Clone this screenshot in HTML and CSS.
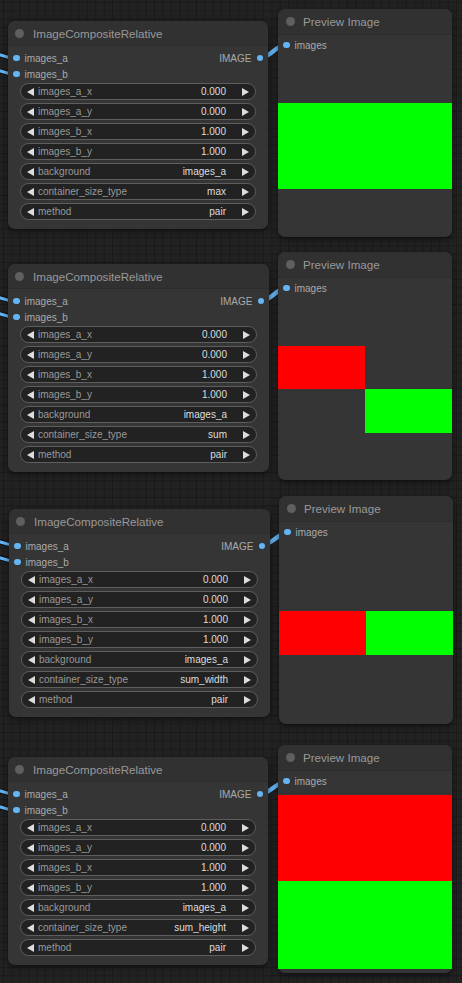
FILE: index.html
```html
<!DOCTYPE html>
<html>
<head>
<meta charset="utf-8">
<title>ImageCompositeRelative</title>
<link rel="stylesheet" href="styles.css">
</head>
<body>
<div class="canvas">
  <svg class="links" width="462" height="983" viewBox="0 0 462 983">
    <g class="edge">
      <path d="M -30 47 C -5 47, -5 58, 16 58"/>
      <path d="M -30 63 C -5 63, -5 74, 16 74"/>
      <path d="M 260 58 C 270 58, 276 45, 286 45"/>
      <path d="M -30 290 C -5 290, -5 301, 16 301"/>
      <path d="M -30 306 C -5 306, -5 317, 16 317"/>
      <path d="M 261 301 C 271 301, 277 288, 286 288"/>
      <path d="M -30 534 C -5 534, -5 545, 17 545"/>
      <path d="M -30 550 C -5 550, -5 561, 17 561"/>
      <path d="M 262 545 C 272 545, 278 533, 287 533"/>
      <path d="M -30 783 C -5 783, -5 794, 16 794"/>
      <path d="M -30 799 C -5 799, -5 810, 16 810"/>
      <path d="M 260 794 C 270 794, 276 782, 286 782"/>
    </g>
    <g class="wire">
      <path d="M -30 47 C -5 47, -5 58, 16 58"/>
      <path d="M -30 63 C -5 63, -5 74, 16 74"/>
      <path class="short" d="M 260 58 C 270 58, 276 45, 286 45"/>
      <path d="M -30 290 C -5 290, -5 301, 16 301"/>
      <path d="M -30 306 C -5 306, -5 317, 16 317"/>
      <path class="short" d="M 261 301 C 271 301, 277 288, 286 288"/>
      <path d="M -30 534 C -5 534, -5 545, 17 545"/>
      <path d="M -30 550 C -5 550, -5 561, 17 561"/>
      <path class="short" d="M 262 545 C 272 545, 278 533, 287 533"/>
      <path d="M -30 783 C -5 783, -5 794, 16 794"/>
      <path d="M -30 799 C -5 799, -5 810, 16 810"/>
      <path class="short" d="M 260 794 C 270 794, 276 782, 286 782"/>
    </g>
  </svg>

  <!-- pair 1 -->
  <div class="node proc n1">
    <div class="title"><span class="tdot"></span><span class="ttext">ImageCompositeRelative</span></div>
    <div class="slots">
      <div class="slot-row"><span class="in"><i class="sdot"></i>images_a</span><span class="out">IMAGE<i class="sdot"></i></span></div>
      <div class="slot-row"><span class="in"><i class="sdot"></i>images_b</span></div>
    </div>
    <div class="widgets">
      <div class="widget"><span class="arr l"></span><span class="lbl">images_a_x</span><span class="val">0.000</span><span class="arr r"></span></div>
      <div class="widget"><span class="arr l"></span><span class="lbl">images_a_y</span><span class="val">0.000</span><span class="arr r"></span></div>
      <div class="widget"><span class="arr l"></span><span class="lbl">images_b_x</span><span class="val">1.000</span><span class="arr r"></span></div>
      <div class="widget"><span class="arr l"></span><span class="lbl">images_b_y</span><span class="val">1.000</span><span class="arr r"></span></div>
      <div class="widget"><span class="arr l"></span><span class="lbl">background</span><span class="val">images_a</span><span class="arr r"></span></div>
      <div class="widget"><span class="arr l"></span><span class="lbl">container_size_type</span><span class="val">max</span><span class="arr r"></span></div>
      <div class="widget"><span class="arr l"></span><span class="lbl">method</span><span class="val">pair</span><span class="arr r"></span></div>
    </div>
  </div>
  <div class="node preview p1">
    <div class="title"><span class="tdot"></span><span class="ttext">Preview Image</span></div>
    <div class="slot-row"><span class="in"><i class="sdot"></i>images</span></div>
    <div class="imgarea">
      <div class="img img-max"><div class="g"></div></div>
    </div>
  </div>

  <!-- pair 2 -->
  <div class="node proc n2">
    <div class="title"><span class="tdot"></span><span class="ttext">ImageCompositeRelative</span></div>
    <div class="slots">
      <div class="slot-row"><span class="in"><i class="sdot"></i>images_a</span><span class="out">IMAGE<i class="sdot"></i></span></div>
      <div class="slot-row"><span class="in"><i class="sdot"></i>images_b</span></div>
    </div>
    <div class="widgets">
      <div class="widget"><span class="arr l"></span><span class="lbl">images_a_x</span><span class="val">0.000</span><span class="arr r"></span></div>
      <div class="widget"><span class="arr l"></span><span class="lbl">images_a_y</span><span class="val">0.000</span><span class="arr r"></span></div>
      <div class="widget"><span class="arr l"></span><span class="lbl">images_b_x</span><span class="val">1.000</span><span class="arr r"></span></div>
      <div class="widget"><span class="arr l"></span><span class="lbl">images_b_y</span><span class="val">1.000</span><span class="arr r"></span></div>
      <div class="widget"><span class="arr l"></span><span class="lbl">background</span><span class="val">images_a</span><span class="arr r"></span></div>
      <div class="widget"><span class="arr l"></span><span class="lbl">container_size_type</span><span class="val">sum</span><span class="arr r"></span></div>
      <div class="widget"><span class="arr l"></span><span class="lbl">method</span><span class="val">pair</span><span class="arr r"></span></div>
    </div>
  </div>
  <div class="node preview p2">
    <div class="title"><span class="tdot"></span><span class="ttext">Preview Image</span></div>
    <div class="slot-row"><span class="in"><i class="sdot"></i>images</span></div>
    <div class="imgarea">
      <div class="img img-sum"><div class="r"></div><div class="e"></div><div class="e"></div><div class="g"></div></div>
    </div>
  </div>

  <!-- pair 3 -->
  <div class="node proc n3">
    <div class="title"><span class="tdot"></span><span class="ttext">ImageCompositeRelative</span></div>
    <div class="slots">
      <div class="slot-row"><span class="in"><i class="sdot"></i>images_a</span><span class="out">IMAGE<i class="sdot"></i></span></div>
      <div class="slot-row"><span class="in"><i class="sdot"></i>images_b</span></div>
    </div>
    <div class="widgets">
      <div class="widget"><span class="arr l"></span><span class="lbl">images_a_x</span><span class="val">0.000</span><span class="arr r"></span></div>
      <div class="widget"><span class="arr l"></span><span class="lbl">images_a_y</span><span class="val">0.000</span><span class="arr r"></span></div>
      <div class="widget"><span class="arr l"></span><span class="lbl">images_b_x</span><span class="val">1.000</span><span class="arr r"></span></div>
      <div class="widget"><span class="arr l"></span><span class="lbl">images_b_y</span><span class="val">1.000</span><span class="arr r"></span></div>
      <div class="widget"><span class="arr l"></span><span class="lbl">background</span><span class="val">images_a</span><span class="arr r"></span></div>
      <div class="widget"><span class="arr l"></span><span class="lbl">container_size_type</span><span class="val">sum_width</span><span class="arr r"></span></div>
      <div class="widget"><span class="arr l"></span><span class="lbl">method</span><span class="val">pair</span><span class="arr r"></span></div>
    </div>
  </div>
  <div class="node preview p3">
    <div class="title"><span class="tdot"></span><span class="ttext">Preview Image</span></div>
    <div class="slot-row"><span class="in"><i class="sdot"></i>images</span></div>
    <div class="imgarea">
      <div class="img img-sw"><div class="r"></div><div class="g"></div></div>
    </div>
  </div>

  <!-- pair 4 -->
  <div class="node proc n4">
    <div class="title"><span class="tdot"></span><span class="ttext">ImageCompositeRelative</span></div>
    <div class="slots">
      <div class="slot-row"><span class="in"><i class="sdot"></i>images_a</span><span class="out">IMAGE<i class="sdot"></i></span></div>
      <div class="slot-row"><span class="in"><i class="sdot"></i>images_b</span></div>
    </div>
    <div class="widgets">
      <div class="widget"><span class="arr l"></span><span class="lbl">images_a_x</span><span class="val">0.000</span><span class="arr r"></span></div>
      <div class="widget"><span class="arr l"></span><span class="lbl">images_a_y</span><span class="val">0.000</span><span class="arr r"></span></div>
      <div class="widget"><span class="arr l"></span><span class="lbl">images_b_x</span><span class="val">1.000</span><span class="arr r"></span></div>
      <div class="widget"><span class="arr l"></span><span class="lbl">images_b_y</span><span class="val">1.000</span><span class="arr r"></span></div>
      <div class="widget"><span class="arr l"></span><span class="lbl">background</span><span class="val">images_a</span><span class="arr r"></span></div>
      <div class="widget"><span class="arr l"></span><span class="lbl">container_size_type</span><span class="val">sum_height</span><span class="arr r"></span></div>
      <div class="widget"><span class="arr l"></span><span class="lbl">method</span><span class="val">pair</span><span class="arr r"></span></div>
    </div>
  </div>
  <div class="node preview p4">
    <div class="title"><span class="tdot"></span><span class="ttext">Preview Image</span></div>
    <div class="slot-row"><span class="in"><i class="sdot"></i>images</span></div>
    <div class="imgarea">
      <div class="img img-sh"><div class="r"></div><div class="g"></div></div>
    </div>
  </div>
</div>
</body>
</html>
```

FILE: styles.css
```css
* { box-sizing: border-box; }

html, body {
  margin: 0;
  padding: 0;
}

body {
  width: 462px;
  height: 983px;
  overflow: hidden;
  background-color: #222222;
  font-family: "Liberation Sans", Arial, sans-serif;
}

.canvas {
  position: relative;
  width: 462px;
  height: 983px;
  overflow: hidden;
  background-color: #222222;
  background-image:
    linear-gradient(to right, #1a1a1a 1px, transparent 1px),
    linear-gradient(to bottom, #1a1a1a 1px, transparent 1px);
  background-size: 8.4px 8.4px;
  background-position: 3px 2px;
}

.links {
  position: absolute;
  left: 0;
  top: 0;
  z-index: 0;
}

.links path {
  fill: none;
  stroke-linecap: round;
}

.edge path {
  stroke: rgba(0, 0, 0, 0.55);
  stroke-width: 5;
}

.wire path {
  stroke: #64b5f6;
  stroke-width: 3;
}

.wire path.short {
  stroke-width: 4.5;
}

/* ---------- nodes ---------- */
.node {
  position: absolute;
  z-index: 1;
  display: flex;
  flex-direction: column;
  background: #353535;
  border-radius: 7px;
  box-shadow: 0 2px 6px rgba(0, 0, 0, 0.55);
}

.n1 { left: 8px;  top: 21px;  width: 260px; height: 208px; }
.n2 { left: 8px;  top: 264px; width: 261px; height: 208px; }
.n3 { left: 9px;  top: 509px; width: 261px; height: 208px; }
.n4 { left: 8px;  top: 757px; width: 260px; height: 208px; }

.p1 { left: 278px; top: 9px;   width: 174px; height: 228px; }
.p2 { left: 278px; top: 252px; width: 174px; height: 228px; }
.p3 { left: 279px; top: 496px; width: 174px; height: 228px; }
.p4 { left: 278px; top: 745px; width: 174px; height: 228px; }

.title {
  display: flex;
  align-items: center;
  height: 25px;
  padding-left: 7px;
  background: #313131;
  border-radius: 7px 7px 0 0;
  border-bottom: 1px solid #2c2c2c;
  flex-shrink: 0;
}

.preview .title {
  height: 26px;
  padding-left: 7.5px;
}

.tdot {
  width: 9px;
  height: 9px;
  border-radius: 50%;
  background: #5f5f5f;
  flex-shrink: 0;
}

.ttext {
  margin-left: 9px;
  font-size: 11.6px;
  color: #999999;
  white-space: nowrap;
}

.preview .ttext {
  margin-left: 8.5px;
}

/* ---------- slots ---------- */
.slots {
  display: flex;
  flex-direction: column;
  padding-top: 4px;
}

.slot-row {
  display: flex;
  align-items: center;
  justify-content: space-between;
  height: 16px;
  padding: 0 5px;
  font-size: 10px;
  color: #aaaaaa;
}

.preview .slot-row {
  margin-top: 2px;
}

.in, .out {
  display: flex;
  align-items: center;
  gap: 5px;
  white-space: nowrap;
}

.sdot {
  width: 6.5px;
  height: 6.5px;
  border-radius: 50%;
  background: #64b5f6;
  flex-shrink: 0;
}

/* ---------- widgets ---------- */
.widgets {
  display: flex;
  flex-direction: column;
  gap: 3px;
  padding: 1px 12px 0 12px;
}

.widget {
  display: flex;
  align-items: center;
  height: 17px;
  padding: 0 6px;
  background: #222222;
  border: 1px solid #5e5e5e;
  border-radius: 9px;
  font-size: 10px;
  white-space: nowrap;
}

.arr {
  width: 0;
  height: 0;
  border-top: 4px solid transparent;
  border-bottom: 4px solid transparent;
  flex-shrink: 0;
}

.arr.l { border-right: 7px solid #dddddd; }
.arr.r { border-left: 7px solid #dddddd; }

.lbl {
  margin-left: 4px;
  color: #999999;
  flex: 1;
}

.val {
  margin-right: 16px;
  color: #dddddd;
}

/* ---------- preview images ---------- */
.imgarea {
  display: flex;
  align-items: center;
  justify-content: center;
  height: 174px;
  margin-top: 6px;
}

.img {
  width: 174px;
  display: grid;
}

.img .r { background: #ff0000; }
.img .g { background: #00ff00; }

.img-max { height: 86px; grid-template-columns: 1fr; }

.img-sum {
  height: 87px;
  grid-template-columns: 87px 87px;
  grid-template-rows: 43.5px 43.5px;
}

.img-sw {
  height: 44px;
  grid-template-columns: 87px 87px;
}

.img-sh {
  height: 174px;
  grid-template-rows: 86px 88px;
}
```
